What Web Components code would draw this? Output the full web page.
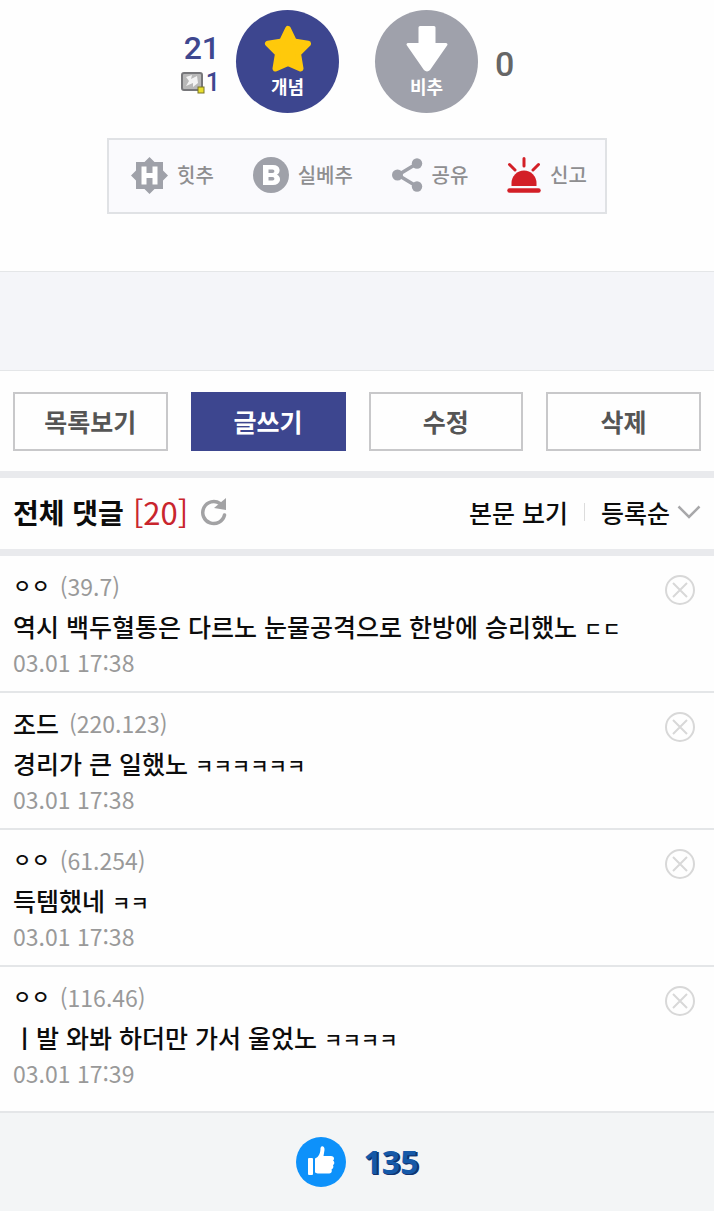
<!DOCTYPE html>
<html lang="ko">
<head>
<meta charset="utf-8">
<meta name="viewport" content="width=device-width, initial-scale=1">
<title>전체 댓글</title>
<style>
  body { margin: 0; background: #fefefe; color: #0c0c0c; font-family: "Noto Sans CJK KR", "Noto Sans", sans-serif; }
</style>
</head>
<body>
<gallery-page></gallery-page>

<template id="gallery-page">
  <style>
    :host { display: flex; flex-direction: column; min-height: 100vh; }
    .ad { height: 98px; background: #f4f5f9; border: solid #e4e6e8; border-width: 1px 0; }
    main { display: flex; flex-direction: column; }
  </style>
  <vote-panel></vote-panel>
  <action-bar>
    <icon-action label="힛추">
      <svg width="37" height="37" viewBox="0 0 37 37"><path fill="#9fa1a9" d="M18.500 0L23.500 5H32V13.500L37 18.500L32 23.500V32H23.500L18.500 37L13.500 32H5V23.500L0 18.500L5 13.500V5H13.500Z"/><path d="M13 9.500V27.500M24 9.500V27.500M13 18.500H24" fill="none" stroke="#fff" stroke-width="5"/></svg>
    </icon-action>
    <icon-action label="실베추">
      <svg width="36" height="36" viewBox="0 0 36 36"><circle cx="18" cy="18" r="18" fill="#9fa1a9"/><path fill="#fff" fill-rule="evenodd" d="M10 8H20C28 8 28 16 24 17.500C29 20 28 28 20 28H10ZM15.500 12.500V16H19.500C22 16 22 12.500 19.500 12.500ZM15.500 20V23.500H19.500C22 23.500 22 20 19.500 20Z"/></svg>
    </icon-action>
    <icon-action label="공유">
      <svg width="31" height="34" viewBox="0 0 31 34"><path d="M25 5.500L6 17L25 28.500" fill="none" stroke="#9fa1a9" stroke-width="3.500"/><g fill="#9fa1a9"><circle cx="25" cy="5.500" r="5.200"/><circle cx="5.500" cy="17" r="5.500"/><circle cx="25" cy="28.500" r="5.200"/></g></svg>
    </icon-action>
    <icon-action label="신고">
      <svg width="34" height="36" viewBox="0 0 34 36"><g stroke="#d31f27" stroke-width="3" stroke-linecap="round"><path d="M17 1.500V9M2.500 7.500L8 13M31.500 7.500L26 13"/><path d="M2.500 33.500H31.500" stroke-width="4.500"/></g><path fill="#d31f27" d="M4.500 29V26A12.500 12.500 0 0 1 29.500 26V29Z"/></svg>
    </icon-action>
  </action-bar>
  <div class="ad"></div>
  <main>
    <post-nav></post-nav>
    <comment-header count="20"></comment-header>
    <comment-item ip="39.7" date="03.01 17:38"><small slot="name">ㅇㅇ</small>역시 백두혈통은 다르노 눈물공격으로 한방에 승리했노 <small>ㄷㄷ</small></comment-item>
    <comment-item ip="220.123" date="03.01 17:38"><span slot="name">조드</span>경리가 큰 일했노 <small>ㅋㅋㅋㅋㅋㅋ</small></comment-item>
    <comment-item ip="61.254" date="03.01 17:38"><small slot="name">ㅇㅇ</small>득템했네 <small>ㅋㅋ</small></comment-item>
    <comment-item ip="116.46" date="03.01 17:39"><small slot="name">ㅇㅇ</small>ㅣ발 와봐 하더만 가서 울었노 <small>ㅋㅋㅋㅋ</small></comment-item>
  </main>
  <like-footer count="135"></like-footer>
</template>

<template id="vote-panel">
  <style>
    :host { display: grid; grid-template-columns: 1fr auto auto 1fr; align-items: center; padding: 10px 0 25px; font-family: Roboto, sans-serif; }
    .up { display: flex; flex-direction: column; align-items: flex-end; padding: 5px 16px 0 0; color: #3f478f; font-weight: 500; }
    .total { font-size: 32px; line-height: 38px; }
    .fixed { display: flex; align-items: center; gap: 1px; font-size: 25px; line-height: 32px; }
    .down { padding: 4px 0 0 17px; font-size: 34px; line-height: 38px; color: #666; font-weight: 500; }
    vote-button + vote-button { margin-left: 36px; }
  </style>
  <div class="up">
    <span class="total">21</span>
    <span class="fixed">
      <svg width="24" height="22" viewBox="0 0 24 22"><rect x="1" y="1" width="20" height="17" rx="2" fill="#b8b8b8" stroke="#77777a" stroke-width="2"/><path fill="#f3f3f3" d="M5 5L11 3L10 7L16 4L17 11L12 15L12 11L5 14L8 9Z"/><rect x="17" y="15" width="6" height="6" fill="#e9df2e" stroke="#777328"/></svg>
      <span>1</span>
    </span>
  </div>
  <vote-button label="개념" style="--fill:#3d468f">
    <svg width="50" height="48" viewBox="0 0 50 48"><path fill="#ffc90b" stroke="#ffc90b" stroke-width="6" stroke-linejoin="round" d="M25 4L31 16.500L45 18.700L35 28.500L37.500 43.500L25 38L12.500 43.500L15 28.500L5 18.700L19 16.500Z"/></svg>
  </vote-button>
  <vote-button label="비추" style="--fill:#9fa1ab">
    <svg width="50" height="48" viewBox="0 0 50 48"><path fill="#fff" stroke="#fff" stroke-width="3" stroke-linejoin="round" d="M18 2.500H32V19.500H44L27 44Q25 46 23 44L6 19.500H18Z"/></svg>
  </vote-button>
  <span class="down">0</span>
</template>

<template id="vote-button">
  <style>
    :host { display: block; }
    button { display: flex; flex-direction: column; align-items: center; width: 103px; height: 103px; padding: 15px 0 0; border: 0; border-radius: 50%; background: var(--fill); color: #fff; font: bold 18px/26px "Noto Sans CJK KR", sans-serif; cursor: pointer; }
  </style>
  <button type="button"><slot></slot><span id="label"></span></button>
</template>

<template id="action-bar">
  <style>
    :host { display: flex; justify-content: space-between; align-items: center; box-sizing: border-box; width: 70%; min-height: 76px; margin: 0 auto 57px; padding: 0 18px 2px 22px; border: 2px solid #e0e2e5; background: #fafafd; }
  </style>
  <slot></slot>
</template>

<template id="icon-action">
  <style>
    :host { display: block; }
    button { display: flex; align-items: center; gap: 9px; padding: 0; border: 0; background: none; color: #8e8e90; font: 500 20px/30px "Noto Sans CJK KR", sans-serif; cursor: pointer; }
  </style>
  <button type="button"><slot></slot><span id="label"></span></button>
</template>

<template id="post-nav">
  <style>
    :host { display: block; padding: 21px 13px 20px; border-bottom: 7px solid #e9eaed; }
    nav { display: grid; grid-template-columns: repeat(4, 1fr); gap: 23px; }
    button { height: 59px; padding: 0 0 2px; border: 2px solid #c8c8ca; background: #fefefe; color: #555; font: bold 25px/36px "Noto Sans CJK KR", sans-serif; cursor: pointer; }
    .primary { border-color: #3d468f; background: #3d468f; color: #fff; }
  </style>
  <nav>
    <button type="button">목록보기</button>
    <button type="button" class="primary">글쓰기</button>
    <button type="button">수정</button>
    <button type="button">삭제</button>
  </nav>
</template>

<template id="comment-header">
  <style>
    :host { display: flex; align-items: center; height: 67px; padding: 0 13px 4px; border-bottom: 7px solid #e9eaed; }
    h2 { display: flex; align-items: center; gap: 9px; margin: 0; font-size: 28px; line-height: 40px; font-weight: bold; }
    #count { color: #c9252d; font-size: 31px; font-weight: normal; }
    .refresh { display: flex; margin: 0 auto 0 12px; padding: 0; border: 0; background: none; cursor: pointer; }
    a, select { color: inherit; font: 500 25px/36px "Noto Sans CJK KR", sans-serif; text-decoration: none; }
    i { width: 1px; height: 18px; margin: 0 16px; background: #dcdcdc; }
    .sort { display: grid; grid-template-columns: auto; align-items: center; }
    select, .sort svg { grid-area: 1 / 1; }
    select { appearance: none; padding: 0 30px 0 0; border: 0; background: none; cursor: pointer; }
    .sort svg { justify-self: end; pointer-events: none; }
  </style>
  <h2>전체 댓글 <span id="count"></span></h2>
  <button class="refresh" type="button" aria-label="새로고침">
    <svg width="28" height="28" viewBox="0 0 28 28"><path d="M20 5.500A11 11 0 1 0 24.500 17" fill="none" stroke="#a2a2a4" stroke-width="3.500" stroke-linecap="round"/><path fill="#a2a2a4" d="M26 0V12L14 10Z"/></svg>
  </button>
  <a href="#top">본문 보기</a>
  <i></i>
  <label class="sort">
    <select aria-label="정렬"><option>등록순</option></select>
    <svg width="24" height="14" viewBox="0 0 24 14"><path d="M1.500 1.500L12 12L22.500 1.500" fill="none" stroke="#a8a8aa" stroke-width="2.500"/></svg>
  </label>
</template>

<template id="comment-item">
  <style>
    :host { display: grid; grid-template-columns: 1fr auto; padding: 10px 18px 13px 13px; border-bottom: 2px solid #e4e6e8; }
    :host(:last-of-type) { padding-bottom: 22px; }
    .who { display: flex; align-items: center; gap: 10px; font-size: 25px; line-height: 40px; font-weight: 500; }
    ::slotted(small) { font-size: 20px; line-height: 20px; }
    #ip, time { color: #999; font-size: 23px; font-weight: 400; }
    p { grid-column: 1 / -1; margin: 0; font-size: 25px; line-height: 40px; font-weight: 500; }
    time { grid-column: 1 / -1; line-height: 32px; }
    button { display: flex; align-self: end; padding: 0; border: 0; background: none; cursor: pointer; }
  </style>
  <div class="who"><slot name="name"></slot><span id="ip"></span></div>
  <button type="button" aria-label="삭제"><svg width="32" height="32" viewBox="0 0 32 32"><g fill="none" stroke="#d8d8d8" stroke-width="2"><circle cx="16" cy="16" r="14"/><path d="M9 9L23 23M23 9L9 23"/></g></svg></button>
  <p><slot></slot></p>
  <time id="date"></time>
</template>

<template id="like-footer">
  <style>
    :host { display: flex; flex: 1; justify-content: center; align-items: center; min-height: 98px; background: #f3f5f6; }
    button { display: flex; align-items: center; gap: 18px; padding: 0; border: 0; background: none; color: #1559a8; font: bold 32px/50px "Noto Sans", sans-serif; text-shadow: 1px 1px 0 #12336f, 2px 1px 0 #12336f; cursor: pointer; }
  </style>
  <button type="button" aria-label="좋아요">
    <svg width="50" height="50" viewBox="0 0 50 50"><circle cx="25" cy="25" r="25" fill="#0d91fa"/><g fill="#fff"><rect x="12" y="21" width="5" height="17" rx="1"/><path d="M19 21.500C23 20 24.500 16 24.500 11C25.500 7.500 29 9.500 28.500 13L27.500 19H35C38 19 39 22 37 23.500C39 25 38.500 27.500 37 28C38 30 37 32 35.500 32.500C36.500 35 35 36.500 32.500 36.500H23C21 36.500 20 36 19 35.500Z"/></g></svg>
    <span id="count"></span>
  </button>
</template>

<script>
  class TemplateElement extends HTMLElement {
    connectedCallback() {
      if (this.shadowRoot) return;
      const root = this.attachShadow({ mode: "open" });
      root.append(document.getElementById(this.localName).content.cloneNode(true));
      this.fill(root);
    }
    fill() {}
  }
  class LabelElement extends TemplateElement {
    fill(root) { root.getElementById("label").textContent = this.getAttribute("label"); }
  }

  customElements.define("vote-button", class extends LabelElement {});
  customElements.define("icon-action", class extends LabelElement {});
  customElements.define("vote-panel", class extends TemplateElement {});
  customElements.define("action-bar", class extends TemplateElement {});
  customElements.define("post-nav", class extends TemplateElement {});
  customElements.define("comment-header", class extends TemplateElement {
    fill(root) { root.getElementById("count").textContent = `[${this.getAttribute("count")}]`; }
  });
  customElements.define("comment-item", class extends TemplateElement {
    fill(root) {
      root.getElementById("ip").textContent = `(${this.getAttribute("ip")})`;
      root.getElementById("date").textContent = this.getAttribute("date");
    }
  });
  customElements.define("like-footer", class extends TemplateElement {
    fill(root) { root.getElementById("count").textContent = this.getAttribute("count"); }
  });
  customElements.define("gallery-page", class extends TemplateElement {});
</script>
</body>
</html>
